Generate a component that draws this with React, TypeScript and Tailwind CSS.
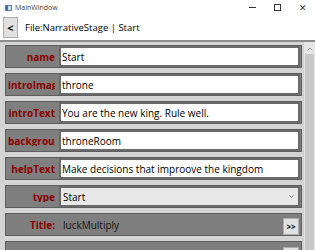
import React from "react";

const font = { fontFamily: '"Open Sans", "Noto Sans", sans-serif' };

function Label({ text }: { text: string }) {
  return (
    <div className="w-[47px] ml-[2px] shrink-0 overflow-hidden whitespace-nowrap text-right text-[10px] font-bold text-[#8b0000] leading-none">
      {text}
    </div>
  );
}

function Row({ children }: { children: React.ReactNode }) {
  return (
    <div className="h-[23px] shrink-0 border border-[#5e5e5e] bg-[#7f7f7f] flex items-center">{children}</div>
  );
}

function InputRow({ label, value }: { label: string; value: string }) {
  return (
    <Row>
      <Label text={label} />
      <div className="ml-[4px] mr-[1px] flex-1 h-[21px] border-2 border-[#6a6a6a] bg-white flex items-center pl-[1px] text-[10px] text-black whitespace-nowrap overflow-hidden leading-none">
        {value}
      </div>
    </Row>
  );
}

export default function App() {
  return (
    <div className="w-[315px] h-[250px] overflow-hidden bg-white flex flex-col" style={font}>
      {/* title bar */}
      <div className="h-[15px] shrink-0 flex items-center bg-white">
        <div className="ml-[5px] w-[7px] h-[6px] border border-[#5a7fa8] bg-[#cfe0f2] relative">
          <div className="absolute left-0 top-0 w-[2px] h-full bg-[#3a6ea5]" />
        </div>
        <span className="ml-[3px] text-[7px] text-[#444] leading-none">MainWindow</span>
        <div className="flex-1" />
        <div className="w-[25px] flex justify-center">
          <div className="w-[7px] h-px bg-[#333]" />
        </div>
        <div className="w-[25px] flex justify-center">
          <div className="w-[7px] h-[7px] border border-[#333]" />
        </div>
        <div className="w-[25px] flex justify-center text-[9px] leading-none text-[#333]">✕</div>
      </div>
      {/* header */}
      <div className="h-[25px] shrink-0 flex items-center">
        <div className="ml-[3px] w-[15px] h-[21px] bg-[#e1e1e1] border border-[#adadad] flex items-center justify-center text-[11px] font-bold leading-none text-black">
          &lt;
        </div>
        <span className="ml-[7px] text-[9.5px] text-black leading-none whitespace-nowrap">File:NarrativeStage | Start</span>
      </div>
      {/* content */}
      <div className="flex-1 flex border-t-2 border-[#8c8c8c] bg-[#d4d4d4] min-h-0">
        <div className="flex-1 flex flex-col gap-[5px] pt-[3px] pl-[5px] pr-[1px] overflow-hidden">
          <InputRow label="name" value="Start" />
          <InputRow label="introImage" value="throne" />
          <InputRow label="introText" value="You are the new king. Rule well." />
          <InputRow label="background" value="throneRoom" />
          <InputRow label="helpText" value="Make decisions that improove the kingdom" />
          <Row>
            <Label text="type" />
            <div className="ml-[4px] mr-[1px] flex-1 h-[21px] border-2 border-[#6a6a6a] bg-[#e8e8e8] flex items-center pl-[2px] pr-[4px] text-[10px] text-black leading-none">
              <span className="flex-1">Start</span>
              <svg width="5" height="3" viewBox="0 0 5 3">
                <path d="M0.5 0.5 L2.5 2.5 L4.5 0.5" stroke="#666" strokeWidth="0.8" fill="none" />
              </svg>
            </div>
          </Row>
          <Row>
            <Label text="Title:" />
            <span className="ml-[8px] flex-1 text-[10px] text-[#111] leading-none">luckMultiply</span>
            <div className="mr-[2px] mt-[4px] w-[16px] h-[17px] bg-[#e1e1e1] border border-[#adadad] flex items-center justify-center text-[8px] font-bold text-black leading-none">
              &gt;&gt;
            </div>
          </Row>
          <div className="h-[23px] shrink-0 border border-[#5e5e5e] bg-[#7f7f7f] flex items-start justify-end">
            <div className="mr-[2px] mt-[5px] w-[16px] h-[17px] bg-[#e1e1e1] border border-[#adadad]" />
          </div>
        </div>
        {/* scrollbar */}
        <div className="w-[12px] shrink-0 flex flex-col bg-[#e6e6e6] border-l border-[#cfcfcf]">
          <div className="h-[11px] flex items-center justify-center mt-[1px]">
            <svg width="6" height="4" viewBox="0 0 6 4">
              <path d="M0.5 3.5 L3 1 L5.5 3.5" stroke="#a3a3a3" strokeWidth="1" fill="none" />
            </svg>
          </div>
          <div className="flex-1 mx-[1px] bg-[#c8c8c8]" />
        </div>
      </div>
    </div>
  );
}
